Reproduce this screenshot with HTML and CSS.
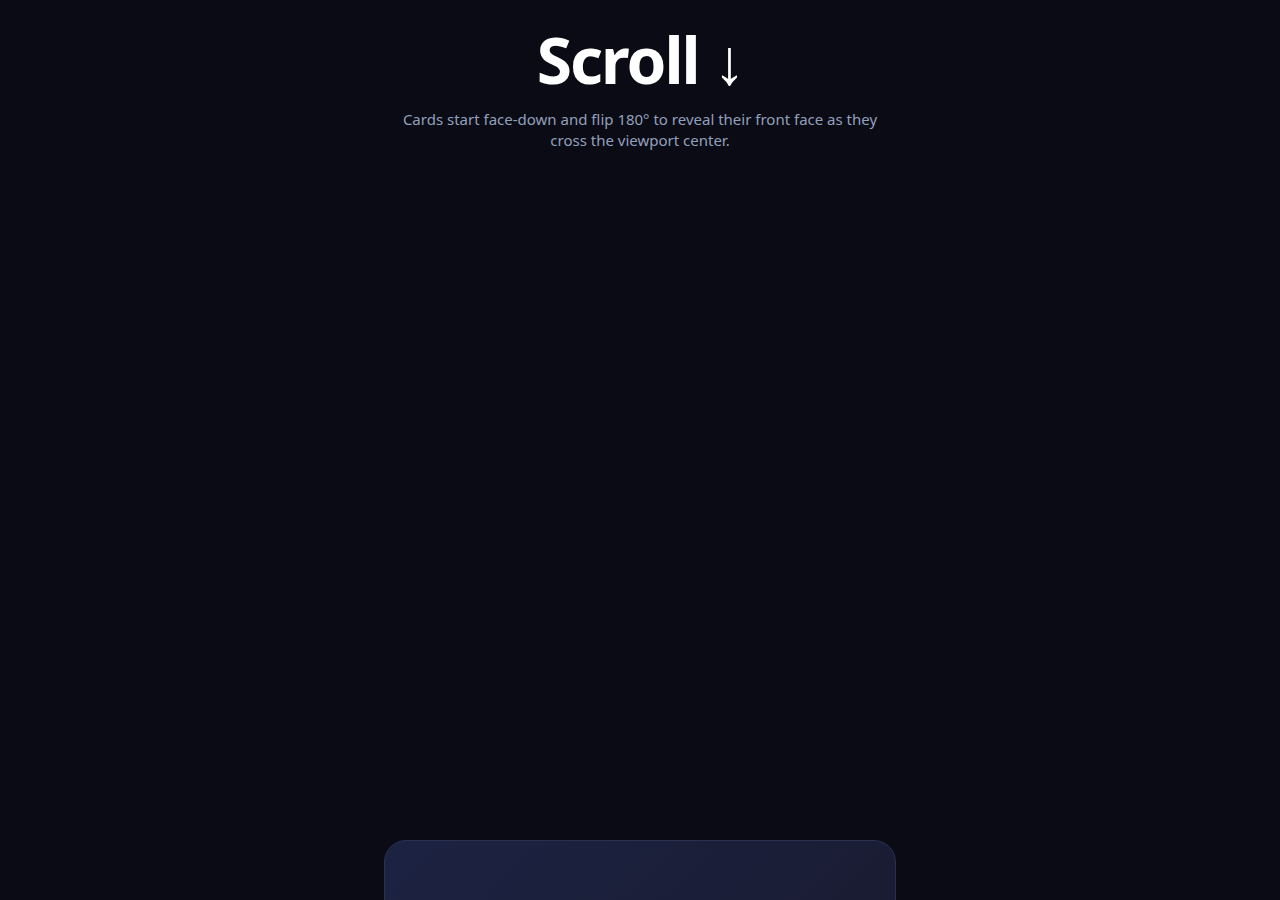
FILE: index.html
```html
<!DOCTYPE html>
<html lang="en">
<head>
<meta charset="utf-8">
<title>Scroll flip cards</title>
<link rel="stylesheet" href="styles.css">
</head>
<body>
<header class="intro">
  <h1 class="title">Scroll ↓</h1>
  <p class="subtitle">Cards start face-down and flip 180° to reveal their front face as they cross the viewport center.</p>
</header>
<main class="stack">
  <div class="card"></div>
  <div class="card"></div>
</main>
</body>
</html>
```
FILE: styles.css
```css
html, body {
  margin: 0;
  padding: 0;
}
body {
  background: #0a0b14;
  color: #ffffff;
  font-family: "Noto Sans", "Open Sans", sans-serif;
  overflow: hidden;
  height: 900px;
}
.intro {
  display: flex;
  flex-direction: column;
  align-items: center;
  padding-top: 20px;
}
.title {
  margin: 0;
  font-size: 64px;
  line-height: 80px;
  font-weight: 700;
  letter-spacing: -2px;
}
.subtitle {
  margin: 9px 0 0;
  max-width: 490px;
  text-align: center;
  font-size: 15px;
  line-height: 21px;
  color: #93a0bd;
}
.stack {
  display: flex;
  flex-direction: column;
  align-items: center;
  gap: 40px;
  padding-top: 689px;
}
.card {
  width: 510px;
  height: 320px;
  border-radius: 22px;
  border: 1px solid #2a3150;
  background: linear-gradient(135deg, #1c2342 0%, #1a1e38 45%, #181b2c 100%);
}
```
